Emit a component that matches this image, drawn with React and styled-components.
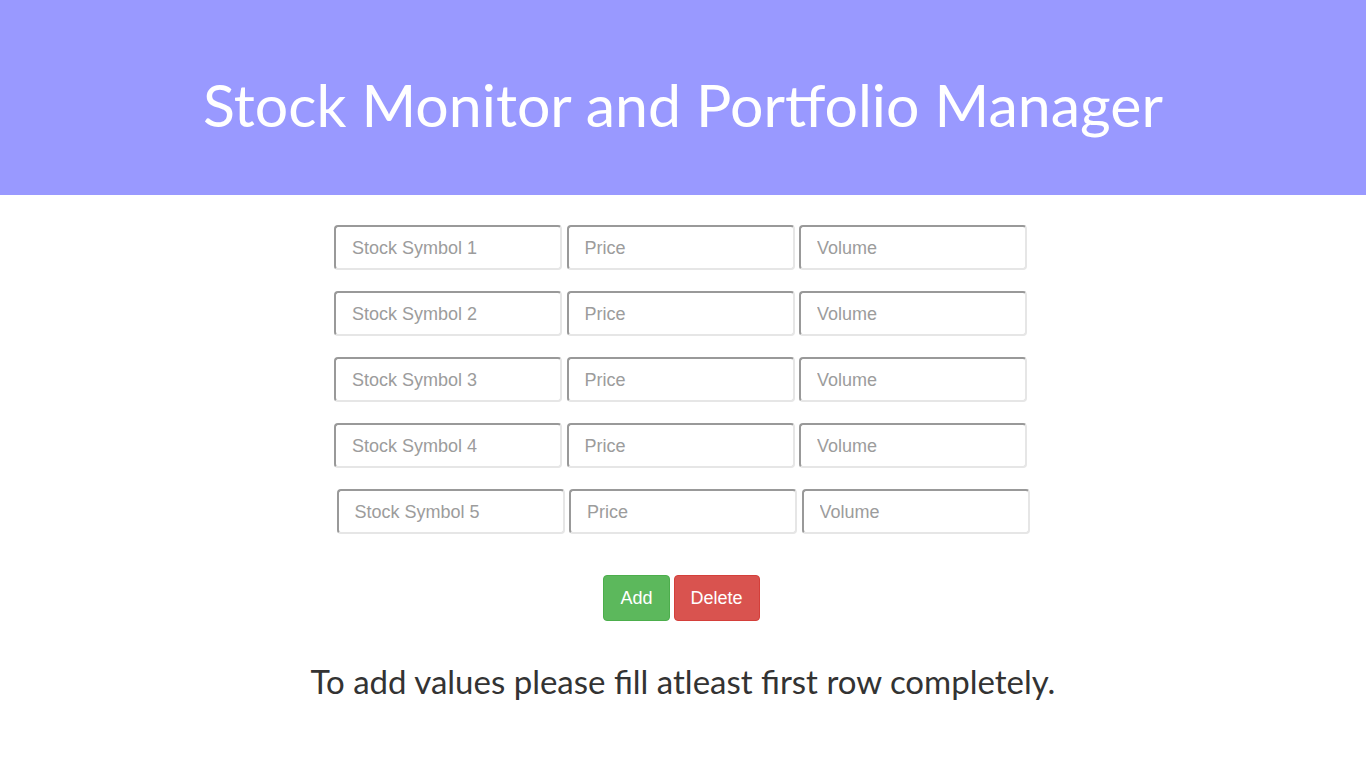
import React from "react";
import styled, { createGlobalStyle } from "styled-components";

const Global = createGlobalStyle`
  html, body { margin: 0; padding: 0; background: #fff; }
  body { font-family: "Liberation Sans", Arial, sans-serif; }
`;

const Header = styled.header`
  background: #9999ff;
  height: 195px;
  display: flex;
  align-items: center;
  justify-content: center;
  padding-top: 14px;
  box-sizing: border-box;
`;

const Title = styled.h1`
  margin: 0;
  color: #fff;
  font-family: Lato, "Open Sans", sans-serif;
  font-weight: 400;
  font-size: 59px;
`;

const Form = styled.div`
  display: flex;
  flex-direction: column;
  align-items: center;
  padding-top: 30px;
  gap: 21px;
`;

const Row = styled.div`
  display: flex;
  gap: 4.5px;
  margin-left: ${(p) => p.$shift || 0}px;
`;

const Field = styled.input`
  width: 228px;
  height: 45px;
  box-sizing: border-box;
  border-style: solid;
  border-width: 2px;
  border-color: #999 #e6e6e6 #e6e6e6 #999;
  border-radius: 4px;
  padding: 2px 0 0 16px;
  font-family: "Liberation Sans", Arial, sans-serif;
  font-size: 18px;
  color: #333;
  background: #fff;
  outline: none;
  &::placeholder { color: #9c9c9c; }
`;

const Buttons = styled.div`
  display: flex;
  justify-content: center;
  gap: 4px;
  margin-top: 41px;
  margin-left: -3px;
`;

const Btn = styled.button`
  height: 46px;
  padding: 0 16px;
  border-radius: 4px;
  border: 1px solid ${(p) => (p.$kind === "add" ? "#4cae4c" : "#d43f3a")};
  background: ${(p) => (p.$kind === "add" ? "#5cb85c" : "#d9534f")};
  color: #fff;
  font-family: "Liberation Sans", Arial, sans-serif;
  font-size: 18px;
  cursor: pointer;
`;

const Note = styled.p`
  margin: 40px 0 0;
  text-align: center;
  color: #333;
  font-family: Lato, "Open Sans", sans-serif;
  font-size: 33px;
`;

export default function App() {
  const rows = [1, 2, 3, 4, 5];
  return (
    <>
      <Global />
      <Header>
        <Title>Stock Monitor and Portfolio Manager</Title>
      </Header>
      <Form>
        {rows.map((n) => (
          <Row key={n} $shift={n === 5 ? 0 : -5}>
            <Field placeholder={`Stock Symbol ${n}`} />
            <Field placeholder="Price" />
            <Field placeholder="Volume" />
          </Row>
        ))}
      </Form>
      <Buttons>
        <Btn $kind="add">Add</Btn>
        <Btn $kind="del">Delete</Btn>
      </Buttons>
      <Note>To add values please fill atleast first row completely.</Note>
    </>
  );
}
